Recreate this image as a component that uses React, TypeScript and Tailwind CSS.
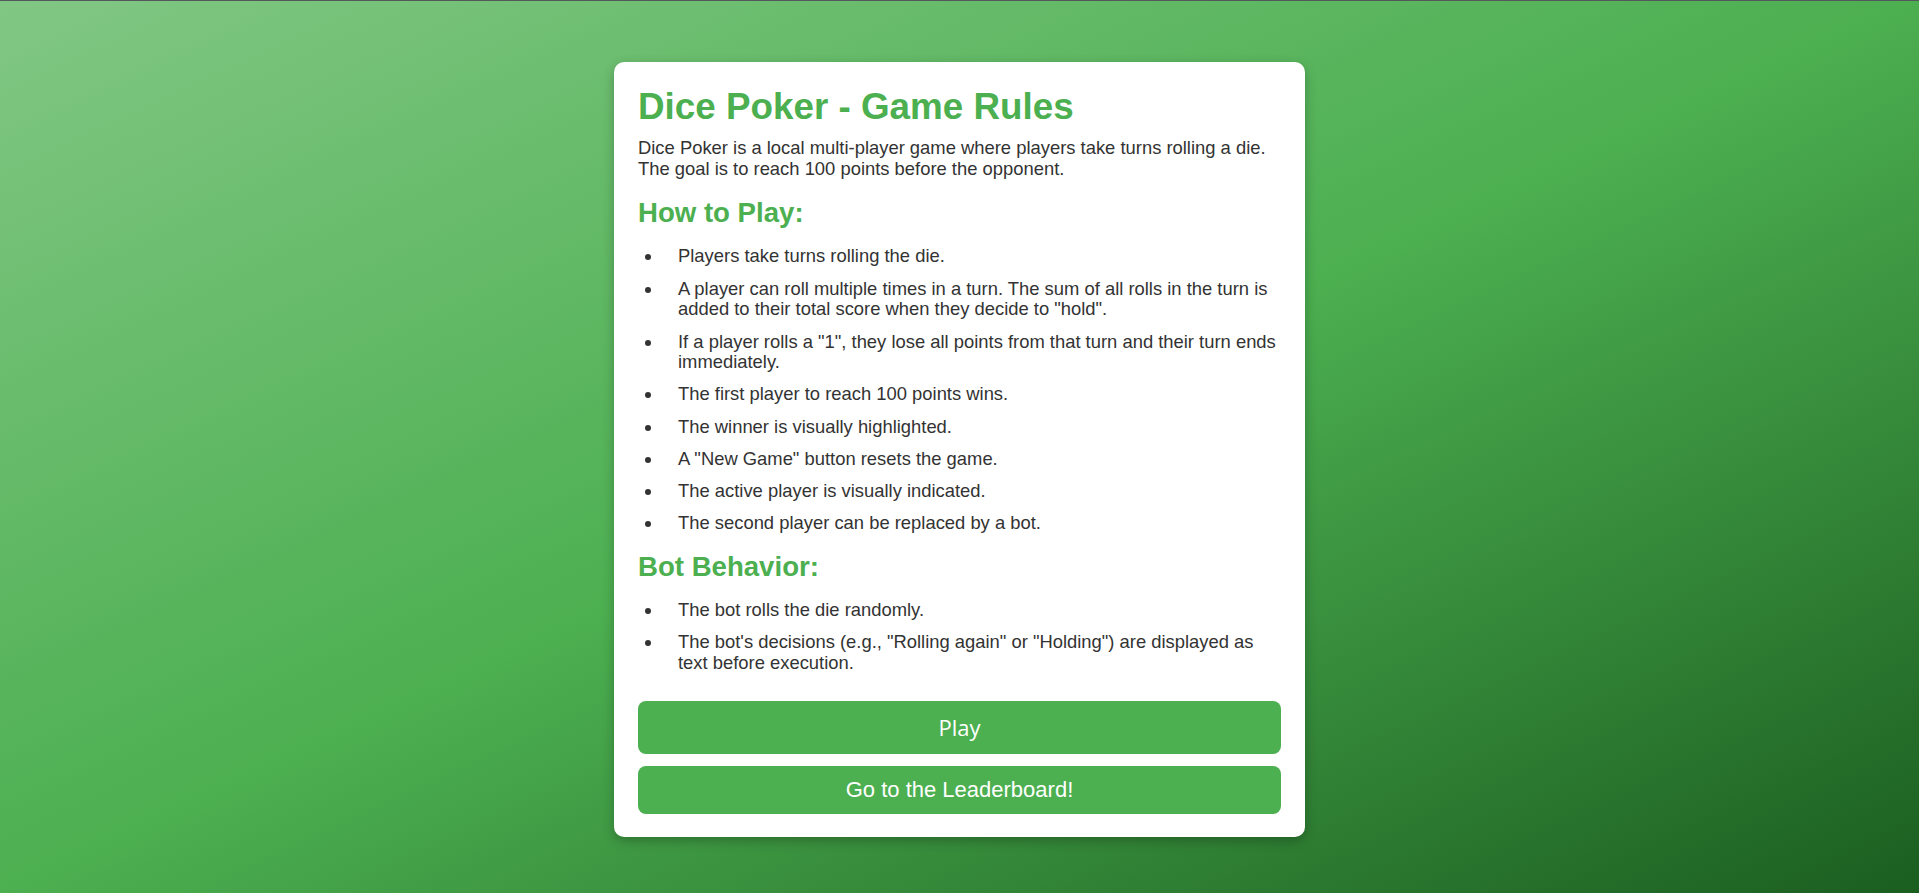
import React from "react";

const rules = [
  "Players take turns rolling the die.",
  'A player can roll multiple times in a turn. The sum of all rolls in the turn is added to their total score when they decide to "hold".',
  'If a player rolls a "1", they lose all points from that turn and their turn ends immediately.',
  "The first player to reach 100 points wins.",
  "The winner is visually highlighted.",
  'A "New Game" button resets the game.',
  "The active player is visually indicated.",
  "The second player can be replaced by a bot.",
];

const bot = [
  "The bot rolls the die randomly.",
  'The bot\'s decisions (e.g., "Rolling again" or "Holding") are displayed as text before execution.',
];

export default function App() {
  return (
    <div className="min-h-screen w-full flex flex-col bg-[linear-gradient(to_bottom_right,#81c784,#4caf50,#1b5e20)] font-['Liberation_Sans',Arial,sans-serif] text-[#333]">
      <div className="h-px w-full bg-[#54575c]" />
      <div className="flex justify-center pt-[61px]">
        <div className="w-[691px] bg-white rounded-[10px] p-[24px] pb-[23px] shadow-[0_4px_12px_rgba(0,0,0,0.25)]">
          <h1 className="text-[36.8px] font-bold leading-[normal] text-[#4caf50]">
            Dice Poker - Game Rules
          </h1>
          <p className="mt-[10px] text-[18.4px] leading-[20.7px]">
            Dice Poker is a local multi-player game where players take turns rolling a die. The goal is to reach 100 points before the opponent.
          </p>
          <h2 className="mt-[18px] text-[27.6px] font-bold leading-[normal] text-[#4caf50]">
            How to Play:
          </h2>
          <ul className="mt-[17px] pl-[25px] list-disc flex flex-col gap-[11.5px] text-[18.4px] leading-[20.7px]">
            {rules.map((r) => (
              <li key={r} className="pl-[15px]">
                {r}
              </li>
            ))}
          </ul>
          <h2 className="mt-[17px] text-[27.6px] font-bold leading-[normal] text-[#4caf50]">
            Bot Behavior:
          </h2>
          <ul className="mt-[17px] pl-[25px] list-disc flex flex-col gap-[11.5px] text-[18.4px] leading-[20.7px]">
            {bot.map((r) => (
              <li key={r} className="pl-[15px]">
                {r}
              </li>
            ))}
          </ul>
          <button className="mt-[27px] w-full h-[53px] flex items-center justify-center rounded-[8px] bg-[#4caf50] text-white text-[22px] font-['Open_Sans',sans-serif]">
            Play
          </button>
          <button className="mt-[12px] w-full h-[48px] flex items-center justify-center rounded-[8px] bg-[#4caf50] text-white text-[22px] font-['Liberation_Sans',Arial,sans-serif]">
            Go to the Leaderboard!
          </button>
        </div>
      </div>
    </div>
  );
}
